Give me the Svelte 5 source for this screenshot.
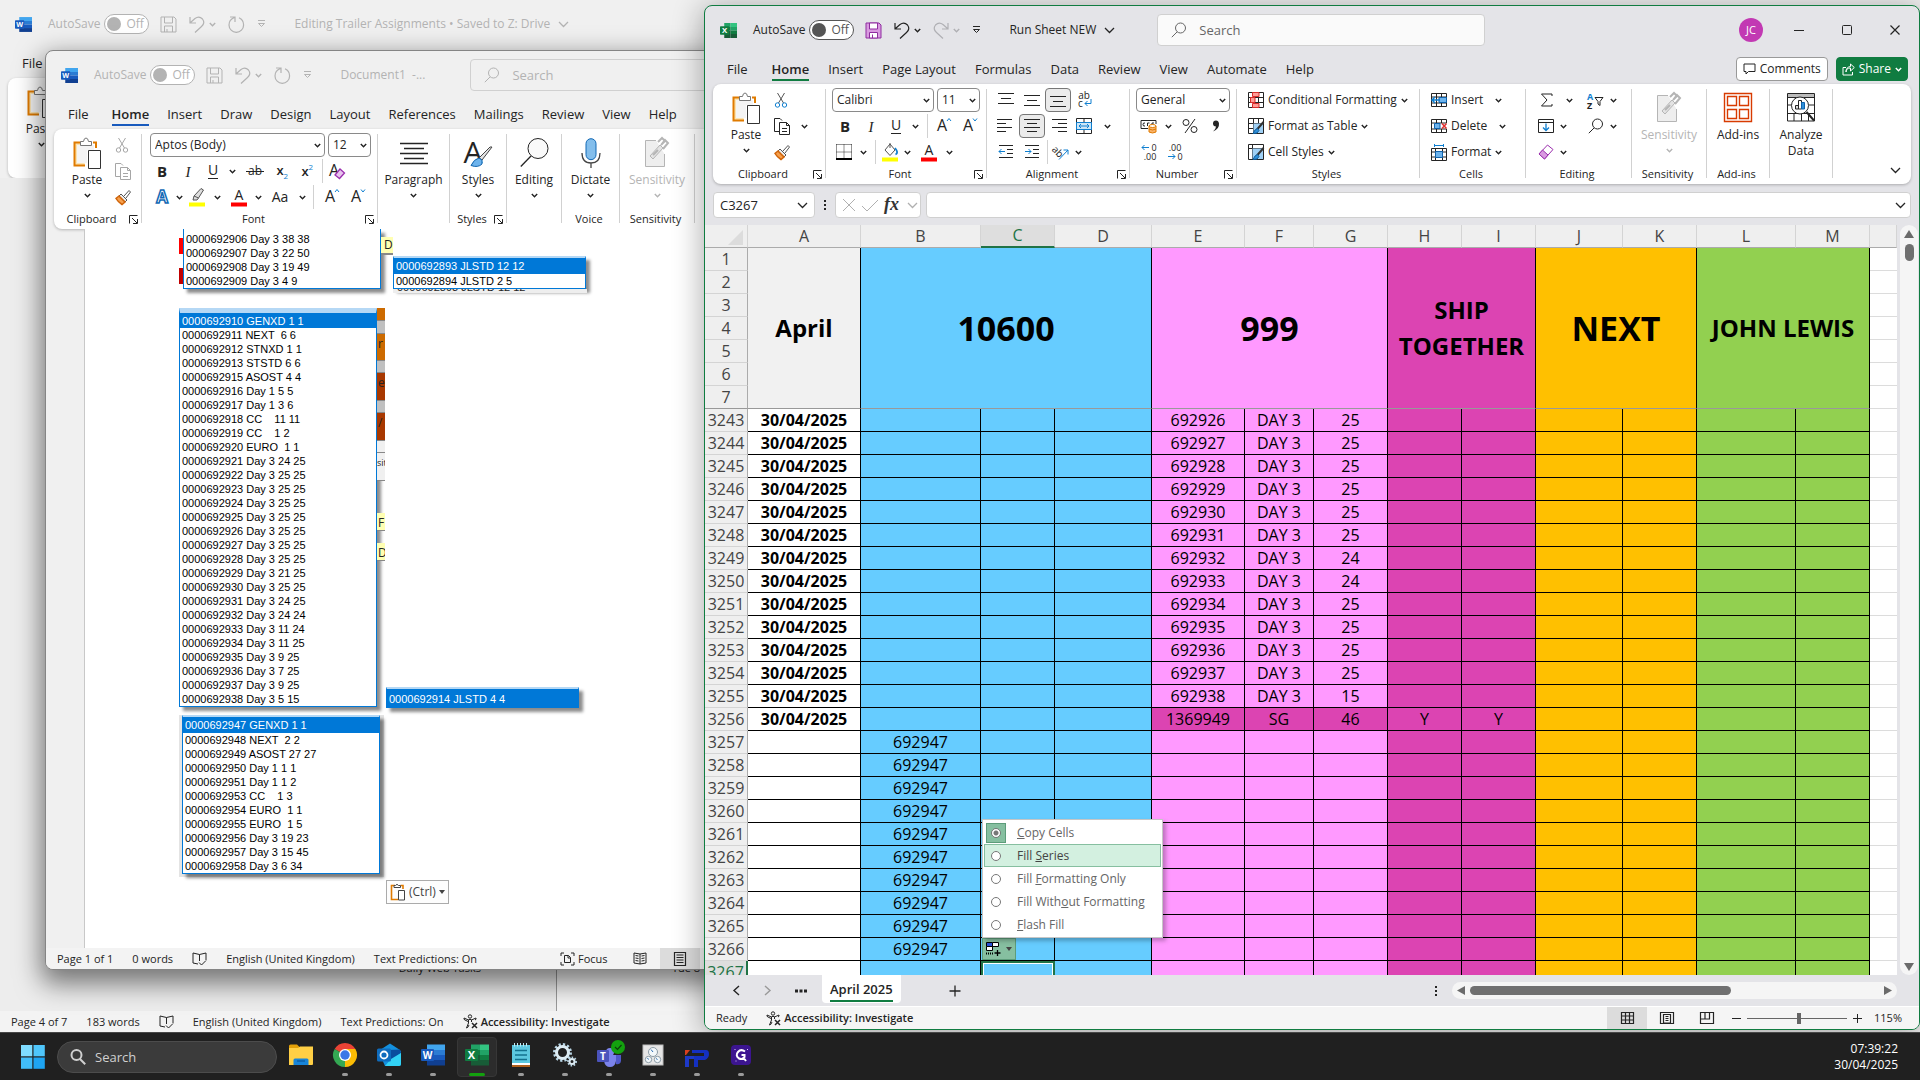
<script lang="ts">
  type Tool = [name: string, width: number, active?: boolean];
  type Icon = [width: number, height: number, body: string];

  const glyph = (x: number, y: number, size: number, s: string, extra = '') =>
    `<text x="${x}" y="${y}" font-size="${size}" text-anchor="middle" fill="currentColor" stroke="none" ${extra}>${s}</text>`;

  const clipboard =
    '<path d="M8 5.500H1.500V28.500H12" fill="#fbe3b0" stroke="#e07b00" stroke-width="2"/><path d="M20 5.500H23V11" stroke="#e07b00" stroke-width="2"/><path d="M4 8H21V13H14V26H4Z" fill="#f4f4f4" stroke="none"/><path d="M7.500 8.500V4.500H10.500Q11 1 13 1T15.500 4.500H18.500V8.500Z" fill="#fff" stroke="#777"/><path d="M15.500 13.500H27.500V31.500H15.500Z" fill="#fff" stroke="#333"/>';
  const brush =
    '<path d="M9 7 14 1.500 15.500 3 11 9" stroke="#555"/><path d="M6 5 12 11 10 13 4 7Z" fill="#eee" stroke="#555"/><path d="M4 7 1 9.500Q3 13 7 15.500L10 13Z" fill="#f6a04d" stroke="#d0640a" stroke-width="1.500"/>';
  const lines = (ys: number[], widths: number[], align = 0) =>
    ys.map((y, i) => `<path d="M${((18 - widths[i]) * align) / 2} ${y}.5h${widths[i]}"/>`).join('');
  const sheet = '<path d="M.5.5h15v15H.5ZM.5 5.500h15M.5 10.500h15M5.500.5v15M10.500.5v15" fill="#fff"/>';
  const label =
    '<path d="M13 3.500H2.500V29.500H21.500V17" fill="#eee"/><path d="M7 19 17 8 20 11 10 22Z" fill="#e3e3e3"/><path d="M15 5 19 1 22 4 18 8M18 8l4-5 3 3-5 6M10 18l5-5" stroke-width="2"/>';
  const letterA = (mark: string) => glyph(7, 14, 16, 'A') + `<path d="${mark}" stroke="#0f7fd0"/>`;

  const icons: Record<string, Icon> = {
    chev: [7, 5, '<path d="M.8 1 3.500 3.800 6.200 1" stroke-width="1.400"/>'],
    chevBig: [11, 7, '<path d="M1 1 5.500 5.500 10 1" stroke-width="1.300"/>'],
    Save: [17, 17, '<path d="M1 1H14L16 3V16H1ZM4.500 1V7H12.500V1M4.500 16V10H12.500V16M7 13V16"/>'],
    SaveColor: [17, 17, '<path d="M1 1H14L16 3V16H1Z" fill="#d99ae0" stroke="#8f2da0"/><path d="M4.500 1V7H12.500V1ZM4.500 16V10.500H12.500V16Z" fill="#fff" stroke="#8f2da0"/><path d="M7.500 12.500V16" stroke="#8f2da0"/>'],
    Undo: [16, 17, '<path d="M1 1V7H7M1.500 6.500 6 2.500Q10-.5 13.500 3 16.500 7 12.500 10.500L6 16.500" stroke-width="1.200"/>'],
    Redo: [16, 17, '<path d="M15 1V7H9M14.500 6.500 10 2.500Q6-.5 2.500 3-.5 7 3.500 10.500L10 16.500" stroke-width="1.200"/>'],
    Repeat: [17, 17, '<path d="M2 1H7V6M6.500 1.500Q1 3.500 1 9A7.300 7.300 0 0 0 15.600 9Q15.600 4 11 1.800" stroke-width="1.200"/>'],
    Customise: [9, 8, '<path d="M1 .5H8M1.500 3.500 4.500 6.500 7.500 3.500Z" stroke-width="1"/>'],
    Find: [16, 16, '<circle cx="9.500" cy="6" r="5"/><path d="M6 10 .8 15.200"/>'],
    Minimise: [12, 12, '<path d="M1 6.500H11"/>'],
    Maximise: [12, 12, '<rect x="1.500" y="1.500" width="9" height="9" rx="1"/>'],
    Close: [12, 12, '<path d="M1.500 1.500 10.500 10.500M10.500 1.500 1.500 10.500" stroke-width="1.200"/>'],
    Comment: [13, 12, '<path d="M1 1H12V8.500H5.500L3 11V8.500H1Z"/>'],
    Share: [13, 13, '<path d="M4 4.500H1V12H10.500V9M4 9Q4 5 8.500 5V8L12.300 4.500 8.500 1V3.500Q4 4 4 9Z"/>'],
    Paste: [28, 32, clipboard],
    Cut: [14, 16, '<path d="M3.500 1 9.500 11M10.500 1 4.500 11" stroke="#555"/><circle cx="3.500" cy="13" r="2.200" stroke="#0f7fd0"/><circle cx="10.500" cy="13" r="2.200" stroke="#0f7fd0"/>'],
    CutOff: [14, 16, '<path d="M3.500 1 9.500 11M10.500 1 4.500 11"/><circle cx="3.500" cy="13" r="2.200"/><circle cx="10.500" cy="13" r="2.200"/>'],
    Copy: [16, 17, '<path d="M5 13.500H.5V.5H6L8 2.500M5.500 4.500V16.500H15.500V7.500L12.500 4.500ZM12.500 4.500V7.500H15.500M8 10.500h5M8 13.500h5"/>'],
    'Format Painter': [16, 17, brush],
    Bold: [12, 17, glyph(6, 14, 15, 'B', 'font-weight="700"')],
    Italic: [12, 17, glyph(6, 14, 15, 'I', 'font-style="italic" font-family="Liberation Serif"')],
    Underline: [12, 18, glyph(6, 13, 14, 'U') + '<path d="M1 16.500H11"/>'],
    Strikethrough: [18, 16, glyph(9, 12, 12, 'ab') + '<path d="M0 8.500H18"/>'],
    Subscript: [14, 16, glyph(5, 12, 13, 'x', 'font-weight="600"') + '<text x="8.500" y="15.500" font-size="8" fill="#0f7fd0" stroke="none">2</text>'],
    Superscript: [14, 16, glyph(5, 13, 13, 'x', 'font-weight="600"') + '<text x="8.500" y="7" font-size="8" fill="#0f7fd0" stroke="none">2</text>'],
    'Clear Formatting': [18, 18, glyph(6, 14, 16, 'A') + '<path d="M7 13 12 7 16.500 11 11.500 16.500Z" fill="#e8c4ee" stroke="#9b2fae" stroke-width="1.300"/>'],
    'Text Effects': [16, 18, '<text x="8" y="15" font-size="17" font-weight="700" text-anchor="middle" fill="#fff" stroke="#1269b5" stroke-width="1.500">A</text>'],
    Highlight: [16, 20, '<path d="M5 9 12 1.500 14.500 3 9.500 11ZM5 9 4 13H8L9.500 11" stroke="#555" fill="#ddd"/><rect x="0" y="15.500" width="16" height="4" fill="#ff0" stroke="none"/>'],
    'Font Color': [16, 20, glyph(8, 12.5, 14, 'A') + '<rect x="0" y="15.500" width="16" height="4" fill="#f00" stroke="none"/>'],
    'Fill Color': [16, 20, '<path d="M3 8 8 2 13 8 8 13.500ZM8 6V1" stroke="#555" fill="#fff"/><path d="M13 6Q17 11 13.500 12.500" stroke="#0f7fd0" stroke-width="1.800"/><rect x="0" y="15.500" width="16" height="4" fill="#ff0" stroke="none"/>'],
    'Change Case': [18, 16, glyph(9, 13, 14, 'Aa')],
    'Grow Font': [17, 18, letterA('M12 4 14 1.500 16 4')],
    'Shrink Font': [17, 18, letterA('M12 1.500 14 4 16 1.500')],
    Borders: [16, 16, '<path d="M.5.5H15.500M.5.5V15M15.500.5V15M8 .5V15M.5 8H15.500" stroke-dasharray="1 1"/><path d="M0 15H16" stroke="#000" stroke-width="2"/>'],
    'Top Align': [18, 14, lines([0, 5, 10], [16, 10, 16], 1)],
    'Middle Align': [18, 14, lines([2, 7, 12], [16, 10, 16], 1)],
    'Bottom Align': [18, 14, lines([3, 8, 13], [16, 10, 16], 1)],
    'Wrap Text': [17, 18, glyph(7, 8, 10, 'ab') + glyph(3.5, 16, 10, 'c') + '<path d="M14 8V12.500H8M10.500 10 8 12.500 10.500 15" stroke="#0f7fd0"/>'],
    'Align Left': [18, 14, lines([0, 4, 8, 12], [15, 9, 15, 9], 0)],
    Center: [18, 14, lines([0, 4, 8, 12], [16, 10, 16, 10], 1)],
    'Align Right': [18, 14, lines([0, 4, 8, 12], [15, 9, 15, 9], 2)],
    Merge: [16, 16, '<path d="M.5.500H15.500V15.500H.5ZM8 .5V4M8 12V15.500"/><path d="M.5 4.500H15.500V11.500H.5Z" fill="#cde6f7" stroke="#0f7fd0"/><path d="M3 8H13M5 6 3 8 5 10M11 6 13 8 11 10" stroke="#0f7fd0"/>'],
    Outdent: [16, 14, '<path d="M1 .5H15M9 4.500H15M9 8.500H15M1 12.500H15"/><path d="M7 6.500H1M3.500 4 1 6.500 3.500 9" stroke="#0f7fd0"/>'],
    Indent: [16, 14, '<path d="M1 .5H15M9 4.500H15M9 8.500H15M1 12.500H15"/><path d="M1 6.500H7M4.500 4 7 6.500 4.500 9" stroke="#0f7fd0"/>'],
    Orientation: [18, 17, '<text x="0" y="8" font-size="10" fill="currentColor" stroke="none" transform="rotate(45 2 6)">ab</text><path d="M7 15.500 16 6M11.500 6H16V10.500" stroke="#0f7fd0"/>'],
    Accounting: [18, 16, '<path d="M1 2.500H16M1 2.500V10.500H8M16 2.500V6M5 5Q3 4.500 3 6.500T5 8M7.500 8V5H9.500M12 8V5H14"/><path d="M9 8V14Q12.500 16 16 14V8" fill="#f9b26a" stroke="#e07b00"/><ellipse cx="12.500" cy="8" rx="3.500" ry="1.500" fill="#fff" stroke="#e07b00"/><path d="M9 11Q12.500 13 16 11" stroke="#e07b00"/>'],
    Percent: [16, 16, '<circle cx="4" cy="4.500" r="3"/><circle cx="12" cy="11.500" r="3"/><path d="M13 1 3 15"/>'],
    Comma: [8, 12, '<path d="M4 .5A3 3 0 1 0 4 6.500Q4 9 1 11.500 7.500 9 7 3.500 6.500.5 4 .5Z" fill="currentColor" stroke="none"/>'],
    'Increase Decimal': [16, 18, glyph(13, 8, 9, '0') + glyph(9, 17, 9, '.00') + '<path d="M8 4.500H1M3.500 2 1 4.500 3.500 7" stroke="#0f7fd0"/>'],
    'Decrease Decimal': [16, 18, glyph(8, 8, 9, '.00') + glyph(13, 17, 9, '0') + '<path d="M1 13.500H8M5.500 11 8 13.500 5.500 16" stroke="#0f7fd0"/>'],
    Conditional: [16, 16, sheet + '<path d="M4.500.5H11V4.500H4.500ZM2.500 5.500H7V10.500H2.500ZM4.500 11.500H11V15.500H4.500Z" fill="#ff9c96" stroke="#d92b2b"/>'],
    TableFormat: [16, 16, sheet + '<path d="M5.500 5.500H15V15H5.500Z" fill="#9fd0f5" stroke="none"/><path d="M15.500 4 9 11.500" stroke="#333" stroke-width="2"/><path d="M9.500 10.500 7 12 5 15.500 9 15 11 12.500Z" fill="#2f8fd8" stroke="#0f5fa0"/>'],
    CellStyles: [16, 16, '<path d="M.5.500H15.500V15.500H.5ZM.5 4.500H15.500M4.500.5V15.500"/><path d="M4.500 4.500H15V15H4.500Z" fill="#9fd0f5" stroke="none"/><path d="M15.500 4 9 11.500" stroke="#333" stroke-width="2"/><path d="M9.500 10.500 7 12 5 15.500 9 15 11 12.500Z" fill="#2f8fd8" stroke="#0f5fa0"/>'],
    InsertCells: [16, 14, '<path d="M.5.5H15.500V13.500H.5ZM.5 4H15M.5 10H15M5.500.5V13.500M10.500.5V13.500"/><path d="M8 4.500H15.500V9.500H8Z" fill="#6db3ec" stroke="#0f63ad"/><path d="M9 7H1M4 4 1 7 4 10" stroke="#0f7fd0" stroke-width="1.500"/>'],
    DeleteCells: [16, 14, '<path d="M.5 13.500V10H15.500V13.500ZM.5 4V.5H15.500V4ZM5.500.5V4M10.500.5V4M5.500 10V13.500M10.500 10V13.500M.5 4V10"/><path d="M3.500 4.500H9V9.500H3.500Z" fill="#6db3ec" stroke="#0f63ad"/><path d="M11 4.500 15.500 9.500M15.500 4.500 11 9.500" stroke="#e03030" stroke-width="1.500"/>'],
    FormatCells: [16, 17, '<path d="M.5 4.500H15.500V16.500H.5ZM.5 8H15.500M.5 13H15.500M4.500 4.500V16.500M11.500 4.500V16.500"/><path d="M4.500 7.500H11.500V13.500H4.500Z" fill="#6db3ec" stroke="#0f63ad"/><path d="M3.500 0V3M12.500 0V3M3.500 1.500H12.500" stroke="#0f7fd0"/>'],
    AutoSum: [13, 14, '<path d="M12 3V1H1.500L7 7 1.500 13H12V11"/>'],
    Fill: [16, 14, '<path d="M.5.5H15.500V13.500H.5ZM.5 3.500H15.500"/><path d="M8 4.500V11.500M5 8.500 8 11.500 11 8.500" stroke="#0f7fd0" stroke-width="1.300"/>'],
    Clear: [16, 16, '<path d="M1 10 9.500 1 15 5.500 6.500 15Z" fill="#fff" stroke="#9b2fae"/><path d="M1 10 4.500 6 10 11 6.500 15Z" fill="#d99ae0" stroke="#9b2fae"/>'],
    Sort: [17, 17, '<text x="0" y="8" font-size="9" font-weight="700" fill="#0f7fd0" stroke="none">A</text><text x="0" y="16.500" font-size="9" font-weight="700" fill="currentColor" stroke="none">Z</text><path d="M8 5.500H16L13 9.500V13.500L11 12V9.500Z"/>'],
    Sensitivity: [28, 32, label],
    AddIns: [28, 29, '<path d="M.5.5H27.500V28.500H.5ZM3.500 3.500H12.500V12.500H3.500ZM15.500 3.500H24.500V12.500H15.500ZM3.500 16.500H12.500V25.500H3.500ZM15.500 16.500H24.500V25.500H15.500Z" stroke="#d83b01" stroke-width="1.400"/>'],
    Analyze: [28, 29, '<path d="M.5.500H27.500V28H.5Z"/><path d="M1 1H27V4H1Z" fill="#bbb" stroke="none"/><path d="M.5 4.500H27.500M.5 12H6M22 12H27.500M.5 20.500H27.500M7 20V28M14.500 20V28M21.500 20V28"/><circle cx="13" cy="12.500" r="8.500" fill="#fff"/><path d="M19.500 19 27 27.500" stroke-width="2"/><path d="M8.500 12.500H11.500V16H8.500Z" fill="#ddd"/><path d="M11.500 7.500H14.500V16H11.500Z" fill="#fff"/><path d="M14.500 9.500H17.500V16H14.500Z" fill="#2f8fd8" stroke="#0f63ad"/>'],
    Paragraph: [28, 22, '<path d="M0 1.500H28M4 6.500H24M0 11.500H28M4 16.500H24M0 21.500H28" stroke-width="1.300"/>'],
    Styles: [30, 30, glyph(10, 25, 30, 'A') + '<path d="M29 9 19 22 16 20 27 9Z" fill="#e4e4e4" stroke="#444"/><path d="M16 20Q11 21 8 27.500 15 30 19 26V22Z" fill="#6db3ec" stroke="#0f63ad"/>'],
    Editing: [28, 29, '<circle cx="18" cy="10.500" r="10" fill="#fafafa"/><path d="M11 18 .8 28.500" stroke-width="1.300"/>'],
    Dictate: [20, 30, '<rect x="5" y=".7" width="10" height="21" rx="5" fill="#83beec" stroke="#1269b5"/><path d="M1 15Q1 25 10 25T19 15M10 25V30" stroke="#444" stroke-width="1.300"/>'],
    launcher: [9, 9, '<path d="M.5 8.500V.5H8.500M3 3 8 8M8.500 4V8.500H4" />'],
    cancel: [14, 14, '<path d="M1 1 13 13M13 1 1 13"/>'],
    enter: [18, 13, '<path d="M1 7 6 12 17 1"/>'],
    fx: [18, 19, '<text x="0" y="14" font-size="18" font-style="italic" font-weight="700" font-family="Liberation Serif" fill="currentColor" stroke="none">fx</text>'],
    dots: [4, 12, '<path d="M1 1H3V3H1ZM1 5H3V7H1ZM1 9H3V11H1Z" fill="currentColor" stroke="none"/>'],
    left: [7, 11, '<path d="M6 1 1 5.500 6 10" stroke-width="1.400"/>'],
    right: [7, 11, '<path d="M1 1 6 5.500 1 10" stroke-width="1.400"/>'],
    more: [12, 4, '<path d="M0 .5H3V3.500H0ZM4.500.5H7.500V3.500H4.500ZM9 .5H12V3.500H9Z" fill="currentColor" stroke="none"/>'],
    plus: [12, 12, '<path d="M6 .5V11.500M.5 6H11.500" stroke-width="1.300"/>'],
    minus: [9, 9, '<path d="M0 4.500H9"/>'],
    zoomPlus: [9, 9, '<path d="M0 4.500H9M4.500 0V9"/>'],
    triLeft: [8, 9, '<path d="M8 0V9L0 4.500Z" fill="#6b6b6b" stroke="none"/>'],
    triRight: [8, 9, '<path d="M0 0V9L8 4.500Z" fill="#6b6b6b" stroke="none"/>'],
    triUp: [10, 8, '<path d="M0 8H10L5 0Z" fill="#6b6b6b" stroke="none"/>'],
    triDown: [10, 8, '<path d="M0 0H10L5 8Z" fill="#6b6b6b" stroke="none"/>'],
    caret: [6, 4, '<path d="M0 0H6L3 4Z" fill="currentColor" stroke="none"/>'],
    corner: [15, 15, '<path d="M15 0V15H0Z" fill="#dcdcdc" stroke="none"/>'],
    Proofing: [15, 14, '<path d="M6 12 1 11V1L7.500 2.500 14 1V8M7.500 2.500V9M7 10.500 9.500 13 14 8.500"/>'],
    Accessibility: [15, 15, '<circle cx="7" cy="2.500" r="1.700"/><path d="M1 4 5.500 6V9L3.500 14M13 4 8.500 6V8M1 4Q.5 5.500 2 6L5 7.500M5.500 5.500H8.500M13 4Q13.500 5.500 12 6M3.500 14Q5 14 6 11"/><path d="M9 9 14 14M14 9 9 14" stroke-width="1.500"/>'],
    Focus: [15, 14, '<path d="M4 1H1V4M11 1H14V4M4 13H1V10M11 13H14V10M4.500 3.500V10.500H10.500V5.500L8.500 3.500ZM8 3.500V6H10.500"/>'],
    'Read Mode': [14, 13, '<path d="M7 2 1 1V11L7 12 13 11V1ZM7 2V12M2.500 3.500 5.500 4M2.500 6 5.500 6.500M2.500 8.500 5.500 9M11.500 3.500 8.500 4M11.500 6 8.500 6.500M11.500 8.500 8.500 9"/>'],
    'Print Layout': [12, 14, '<path d="M.5.5H11.500V13.500H.5ZM2.500 3H9.500M2.500 5.500H9.500M2.500 8H9.500M2.500 10.500H9.500" stroke-width="1.200"/>'],
    Normal: [13, 12, '<path d="M.5.5H12.500V11.500H.5ZM.5 4H12.500M.5 8H12.500M4.500.5V11.500M8.500.5V11.500" stroke-width="1.200"/>'],
    'Page Layout': [14, 12, '<path d="M.5.500H13.500V11.500H.5ZM3.500 2.500H10.500V11H3.500ZM5.500 4.500H8.500M5.500 6.500H8.500M5.500 8.500H8.500" stroke-width="1.200"/>'],
    'Page Break': [14, 12, '<path d="M.5.500H13.500V11.500H.5ZM5 .5V7H.5M9.500.5V7H5" stroke-width="1.200"/>'],
    pasteSmall: [16, 18, '<path d="M5 2.500H1.500V16.500H8" stroke="#e07b00" stroke-width="1.600"/><path d="M10.500 2.500H13V6" stroke="#e07b00" stroke-width="1.600"/><path d="M4 4.500V2.500H5.500Q7 0 8.500 2.500H10.500V4.500Z" fill="#fff"/><path d="M8.500 7.500H14.500V17H8.500Z" fill="#fff"/>'],
    autofill: [16, 14, '<path d="M.5.5H6.500V4.500H.5Z" fill="#2a50d8" stroke="#000"/><path d="M6.500.5H12.500V4.500H6.500ZM.5 4.500H6.500V8.500H.5Z" fill="#fff" stroke="#000"/><path d="M0 11.500H8" stroke="#000" stroke-dasharray="1 1" stroke-width="2"/><path d="M11.500 8V14M8.500 11H14.500" stroke="#000" stroke-width="1.300"/>'],
    wordLogo: [24, 24, '<g stroke="none"><path d="M6 1.500H24V7H6Z" fill="#41a5ee"/><path d="M6 7H24V12H6Z" fill="#2b7cd3"/><path d="M6 12H24V17H6Z" fill="#185abd"/><path d="M6 17H24V22.500H6Z" fill="#103f91"/><rect y="6" width="13" height="12" rx="1" fill="#185abd"/></g><text x="6.500" y="15.500" font-size="10" font-weight="700" text-anchor="middle" fill="#fff" stroke="none">W</text>'],
    excelLogo: [24, 24, '<g stroke="none"><path d="M6 1.500H15V7H6Z" fill="#21a366"/><path d="M15 1.500H24V7H15Z" fill="#33c481"/><path d="M6 7H15V12H6Z" fill="#107c41"/><path d="M15 7H24V12H15Z" fill="#21a366"/><path d="M6 12H15V22.500H6Z" fill="#185c37"/><path d="M15 12H24V17H15Z" fill="#107c41"/><path d="M15 17H24V22.500H15Z" fill="#185c37"/><rect y="6" width="13" height="12" rx="1" fill="#107c41"/></g><text x="6.500" y="15.500" font-size="11" font-weight="700" text-anchor="middle" fill="#fff" stroke="none">X</text>'],
    Start: [24, 24, '<g stroke="none"><path d="M0 0H11.300V11.300H0Z" fill="#7fdcff"/><path d="M12.500 0H23.800V11.300H12.500Z" fill="#4fc6fb"/><path d="M0 12.500H11.300V23.800H0Z" fill="#41bdf8"/><path d="M12.500 12.500H23.800V23.800H12.500Z" fill="#1ea4f2"/></g>'],
    Explorer: [24, 24, '<g stroke="none"><path d="M0 3Q0 1.500 1.500 1.500H8L11 4.500V8H0Z" fill="#e3a008"/><path d="M0 5H9L11 3.500H24V21Q24 22 23 22H0Z" fill="#ffcf45"/><path d="M4.500 22V17Q4.500 15.500 6 15.500H18Q19.500 15.500 19.500 17V22Z" fill="#1784d8"/><path d="M8 18H16" stroke="#0c5fa8" stroke-width="1.500"/></g>'],
    Chrome: [24, 24, '<g stroke="none"><path d="M12 12 1.600 6A12 12 0 0 1 22.400 6Z" fill="#ea4335"/><path d="M12 12 22.400 6A12 12 0 0 1 12 24Z" fill="#fbbc04"/><path d="M12 12V24A12 12 0 0 1 1.600 6Z" fill="#34a853"/><path d="M12 6H22.400L17.200 15 12 24V12Z" fill="#fbbc04"/><circle cx="12" cy="12" r="6" fill="#fff"/><circle cx="12" cy="12" r="4.700" fill="#3b78e7"/></g>'],
    Outlook: [24, 24, '<g stroke="none"><path d="M3 7 13 .5 23 7 24 9V21Q24 23 22 23H8L4 14Z" fill="#1490df"/><path d="M12 7 23 6.500 24 10 14 17Z" fill="#0a4d9e"/><path d="M24 10V21Q24 23 22 23H8L14 16Z" fill="#32d2f5"/><rect y="5.500" width="14" height="13" rx="1.500" fill="#0f6cbd"/></g><circle cx="7" cy="12" r="3.500" stroke="#fff" stroke-width="1.800"/>'],
    Notepad: [20, 24, '<g stroke="none"><path d="M1 2H19V21H1Z" fill="#5cc8e0"/><path d="M1 20H19V22H1Z" fill="#fff"/><path d="M1 22H19V24H1Z" fill="#b0601c"/></g><path d="M4 7.500H16M4 12H16M4 16.500H16" stroke="#13728f" stroke-width="1.600"/><path d="M3.500 0V3.500M6.500 0V3.500M9.500 0V3.500M12.500 0V3.500M15.500 0V3.500" stroke="#bfeaf4"/>'],
    Services: [24, 24, '<circle cx="9.500" cy="9.500" r="8" stroke="#b9d6e6" stroke-width="3" stroke-dasharray="2.200 2"/><circle cx="9.500" cy="9.500" r="6" stroke="#dcebf3" stroke-width="3"/><circle cx="19" cy="18.500" r="4" stroke="#b9d6e6" stroke-width="2" stroke-dasharray="1.500 1.500"/><circle cx="19" cy="18.500" r="2.500" stroke="#dcebf3" stroke-width="2"/>'],
    Teams: [28, 28, '<g stroke="none"><circle cx="15" cy="11" r="4" fill="#7b83eb"/><path d="M9 14H21V20Q20 26 15 26T9 20Z" fill="#7b83eb"/><path d="M21 14H26V20Q25 24 21 23Z" fill="#5059c9"/><rect x="2" y="9" width="12" height="12" rx="1" fill="#4b53bc"/></g><text x="8" y="19" font-size="10" font-weight="700" text-anchor="middle" fill="#fff" stroke="none">T</text><circle cx="23" cy="6" r="7" fill="#13a10e" stroke="none"/><path d="M20 6 22.500 8.500 26.500 4" stroke="#0b3d0a" stroke-width="1.200"/>'],
    Meters: [20, 20, '<rect width="20" height="20" fill="#e6e6e6" stroke="#bdbdbd"/><g stroke="#8a9aa5" fill="#f3f8fb"><circle cx="10" cy="7" r="4.500"/><circle cx="5.500" cy="14.500" r="3.200"/><circle cx="14.500" cy="14.500" r="3.200"/></g><path d="M10 7 8 4.500M5.500 14.500 4.500 13M14.500 14.500 13 13.500" stroke="#2b6cb0"/>'],
    Planner: [24, 24, '<g stroke="none"><path d="M0 13H11V16H4V24H0Z" fill="#1d39c8"/><path d="M7 7H21Q24 7 24 11T20 17H13V24H9V13H19V10H7Z" fill="#1430c0"/><path d="M0 7H5L1 12H0Z" fill="#d8401f"/></g>'],
    Grab: [20, 20, '<rect width="20" height="20" rx="4" fill="#3c1590" stroke="none"/><path d="M14 6.500Q10 3.500 7 7T8 13.500Q12 15 13.500 12V10H10.500M12 12 15 16" stroke="#fff" stroke-width="2"/><path d="M4 4V5M5 15.500V16.500M16.500 4V5" stroke="#d9c8ff"/>'],
  };

  const backTabs = ['File'];
  const wordTabs = ['File', 'Home', 'Insert', 'Draw', 'Design', 'Layout', 'References', 'Mailings', 'Review', 'View', 'Help'];
  const excelTabs = ['File', 'Home', 'Insert', 'Page Layout', 'Formulas', 'Data', 'Review', 'View', 'Automate', 'Help'];

  const wordFont: Tool[][] = [
    [['Bold', 24], ['Italic', 28], ['Underline', 22], ['chev', 16], ['Strikethrough', 30], ['Subscript', 24], ['Superscript', 26], ['sep', 4], ['Clear Formatting', 26]],
    [['Text Effects', 24], ['chev', 10], ['gap', 6], ['Highlight', 26], ['chev', 14], ['Font Color', 30], ['chev', 8], ['Change Case', 36], ['chev', 8], ['sep', 14], ['Grow Font', 22], ['Shrink Font', 30]],
  ];
  const excelFont: Tool[][] = [
    [['Bold', 26], ['Italic', 26], ['Underline', 24], ['chev', 14], ['sep', 10], ['Grow Font', 22], ['Shrink Font', 30]],
    [['Borders', 24], ['chev', 14], ['sep', 10], ['Fill Color', 20], ['chev', 14], ['Font Color', 30], ['chev', 10]],
  ];
  const alignment: Tool[][] = [
    [['Top Align', 26], ['Middle Align', 26], ['Bottom Align', 26, true], ['Wrap Text', 28]],
    [['Align Left', 26], ['Center', 26, true], ['Align Right', 26], ['Merge', 26], ['chev', 20]],
    [['Outdent', 26], ['Indent', 26], ['sep', 4], ['Orientation', 24], ['chev', 10]],
  ];
  const numberTools: Tool[][] = [
    [['Accounting', 26], ['chev', 12], ['Percent', 32], ['Comma', 20]],
    [['Increase Decimal', 26], ['Decrease Decimal', 26]],
  ];
  const editing: Tool[][] = [
    [['AutoSum', 28], ['chev', 18], ['gap', 4], ['Sort', 26], ['chev', 10]],
    [['Fill', 28], ['chev', 6], ['gap', 18], ['Find', 24], ['chev', 10]],
    [['Clear', 28], ['chev', 6]],
  ];
  const cellStyles = [['Conditional', 'Conditional Formatting'], ['TableFormat', 'Format as Table'], ['CellStyles', 'Cell Styles']];
  const cellTools = [['InsertCells', 'Insert'], ['DeleteCells', 'Delete'], ['FormatCells', 'Format']];

  const topLoads = ['0000692906 Day 3 38 38', '0000692907 Day 3 22 50', '0000692908 Day 3 19 49', '0000692909 Day 3 4 9'];
  const mainLoads = [
    '0000692910 GENXD 1 1', '0000692911 NEXT  6 6', '0000692912 STNXD 1 1', '0000692913 STSTD 6 6',
    '0000692915 ASOST 4 4', '0000692916 Day 1 5 5', '0000692917 Day 1 3 6', '0000692918 CC    11 11',
    '0000692919 CC    1 2', '0000692920 EURO  1 1', '0000692921 Day 3 24 25', '0000692922 Day 3 25 25',
    '0000692923 Day 3 25 25', '0000692924 Day 3 25 25', '0000692925 Day 3 25 25', '0000692926 Day 3 25 25',
    '0000692927 Day 3 25 25', '0000692928 Day 3 25 25', '0000692929 Day 3 21 25', '0000692930 Day 3 25 25',
    '0000692931 Day 3 24 25', '0000692932 Day 3 24 24', '0000692933 Day 3 11 24', '0000692934 Day 3 11 25',
    '0000692935 Day 3 9 25', '0000692936 Day 3 7 25', '0000692937 Day 3 9 25', '0000692938 Day 3 5 15',
  ];
  const lastLoads = [
    '0000692947 GENXD 1 1', '0000692948 NEXT  2 2', '0000692949 ASOST 27 27', '0000692950 Day 1 1 1',
    '0000692951 Day 1 1 2', '0000692953 CC    1 3', '0000692954 EURO  1 1', '0000692955 EURO  1 5',
    '0000692956 Day 3 19 23', '0000692957 Day 3 15 45', '0000692958 Day 3 6 34',
  ];

  // slivers of the booking screen that show beside the pasted list
  const slivers = [
    ['orange', 13, ''], ['grey', 13, ''], ['orange', 27, 'r'], ['grey', 12, ''], ['rust', 28, 'e'],
    ['grey', 12, ''], ['rust', 28, '/'], ['plain', 12, ''], ['plain', 28, 'sit'], ['clear', 32, ''],
    ['yellow', 18, 'F'], ['clear', 12, ''], ['yellow', 18, 'D'],
  ] as [string, number, string][];

  const columns = [
    { id: 'A', width: 113, fill: 'white' },
    { id: 'B', width: 120, fill: 'blue' },
    { id: 'C', width: 74, fill: 'blue' },
    { id: 'D', width: 97, fill: 'blue' },
    { id: 'E', width: 93, fill: 'pink' },
    { id: 'F', width: 69, fill: 'pink' },
    { id: 'G', width: 74, fill: 'pink' },
    { id: 'H', width: 74, fill: 'magenta' },
    { id: 'I', width: 74, fill: 'magenta' },
    { id: 'J', width: 87, fill: 'gold' },
    { id: 'K', width: 74, fill: 'gold' },
    { id: 'L', width: 99, fill: 'green' },
    { id: 'M', width: 74, fill: 'green' },
  ];

  const cartons = [25, 25, 25, 25, 25, 25, 24, 24, 25, 25, 25, 25, 15];
  const rows = Array.from({ length: 25 }, (_, i) => {
    const cells: Record<string, string | number> = {};
    if (i < 14) cells.A = '30/04/2025';
    if (i < 13) Object.assign(cells, { E: 692926 + i, F: 'DAY 3', G: cartons[i] });
    if (i === 13) Object.assign(cells, { E: 1369949, F: 'SG', G: 46, H: 'Y', I: 'Y' });
    if (i > 13 && i < 24) cells.B = 692947;
    return { number: 3243 + i, cells };
  });

  const fillOptions = [
    ['', 'C', 'opy Cells'],
    ['Fill ', 'S', 'eries'],
    ['Fill ', 'F', 'ormatting Only'],
    ['Fill With', 'o', 'ut Formatting'],
    ['', 'F', 'lash Fill'],
  ];
  let fillChoice = $state(0);
  let zoom = $state(115);

  const taskbar = ['Explorer', 'Chrome', 'Outlook', 'wordLogo', 'excelLogo', 'Notepad', 'Services', 'Teams', 'Meters', 'Planner', 'Grab'];
</script>

{#snippet icon(name: string, scale = 1)}
  {@const [w, h, body] = icons[name]}
  <svg class="icon" width={Math.round(w * scale)} height={Math.round(h * scale)} viewBox="0 0 {w} {h}" aria-hidden="true">{@html body}</svg>
{/snippet}

{#snippet toolRow(tools: Tool[])}
  <div class="tool-row">
    {#each tools as [name, width, active]}
      {#if name === 'sep'}
        <span class="tool-sep" style:width="{width}px"></span>
      {:else if name === 'gap'}
        <span style:width="{width}px"></span>
      {:else}
        <button class="tool" class:active style:width="{width}px" aria-label={name === 'chev' ? 'More options' : name}>
          {@render icon(name)}
        </button>
      {/if}
    {/each}
  </div>
{/snippet}

{#snippet bigTool(name: string, text: string, arrow = true)}
  <button class="big">
    <span class="big-icon">{@render icon(name)}</span>
    <span class="big-text">{text}</span>
    {#if arrow}<span class="big-arrow">{@render icon('chev')}</span>{/if}
  </button>
{/snippet}

{#snippet groupLabel(text: string, launcher = false)}
  <div class="group-label">
    <span>{text}</span>
    {#if launcher}<button class="launcher" aria-label="{text} settings">{@render icon('launcher')}</button>{/if}
  </div>
{/snippet}

{#snippet combo(text: string, name: string)}
  <div class="combo">
    <select aria-label={name}><option>{text}</option></select>
    {@render icon('chev')}
  </div>
{/snippet}

{#snippet quickAccess(logo: string, save: string, redo: string)}
  <span class="app-logo">{@render icon(logo, 0.7)}</span>
  <span class="autosave">AutoSave</span>
  <button class="toggle" role="switch" aria-checked="false" aria-label="AutoSave"><i></i>Off</button>
  <button class="qa" aria-label="Save">{@render icon(save)}</button>
  <button class="qa" aria-label="Undo">{@render icon('Undo')}{@render icon('chev')}</button>
  <button class="qa redo" aria-label="Redo">{@render icon(redo)}{#if redo === 'Redo'}{@render icon('chev')}{/if}</button>
  <button class="qa" aria-label="Customise toolbar">{@render icon('Customise')}</button>
{/snippet}

{#snippet tabs(names: string[])}
  <nav class="tabs">
    {#each names as name}
      <button class="tab" class:current={name === 'Home'}>{name}</button>
    {/each}
  </nav>
{/snippet}

{#snippet clipboardGroup(cut: string)}
  <div class="group">
    <div class="group-body clip">
      {@render bigTool('Paste', 'Paste')}
      <div class="clip-tools">
        <button class="tool" aria-label="Cut">{@render icon(cut)}</button>
        <button class="tool" aria-label="Copy">
          {@render icon('Copy')}{#if cut === 'Cut'}{@render icon('chev')}{/if}
        </button>
        <button class="tool" aria-label="Format Painter">{@render icon('Format Painter')}</button>
      </div>
    </div>
    {@render groupLabel('Clipboard', true)}
  </div>
  <i class="rule"></i>
{/snippet}

{#snippet bigGroup(size: string, name: string, text: string, caption: string, arrow = true, launcher = false)}
  <div class="group {size}" class:disabled={name === 'Sensitivity'}>
    <div class="group-body">{@render bigTool(name, text, arrow)}</div>
    {@render groupLabel(caption, launcher)}
  </div>
  <i class="rule"></i>
{/snippet}

{#snippet loads(items: string[], selected = true)}
  <ul class="loads" class:has-selection={selected}>
    {#each items as item, i}
      <li class:selected={selected && i === 0}>{item}</li>
    {/each}
  </ul>
{/snippet}

<div class="desktop">
  <div class="workspace">
    <section class="window back">
      <header class="title">
        {@render quickAccess('wordLogo', 'Save', 'Repeat')}
        <span class="doc-name">Editing Trailer Assignments • Saved to Z: Drive {@render icon('chevBig')}</span>
      </header>
      {@render tabs(backTabs)}
      <div class="ribbon">
        <div class="group-body clip">{@render bigTool('Paste', 'Paste')}</div>
      </div>
      <div class="back-doc">
        <div class="back-cell">Daily Web Tasks</div>
        <div class="back-cell last">Tue 8</div>
      </div>
      <footer class="status">
        <span>Page 4 of 7</span>
        <span>183 words</span>
        {@render icon('Proofing')}
        <span>English (United Kingdom)</span>
        <span>Text Predictions: On</span>
        <span class="access">{@render icon('Accessibility')} Accessibility: Investigate</span>
      </footer>
    </section>

    <section class="window front-word">
      <header class="title">
        {@render quickAccess('wordLogo', 'Save', 'Repeat')}
        <span class="doc-name">Document1&nbsp; -...</span>
        <label class="search">{@render icon('Find')}<input aria-label="Search" placeholder="Search" /></label>
      </header>
      {@render tabs(wordTabs)}
      <div class="ribbon">
        {@render clipboardGroup('CutOff')}
        <div class="group font-group">
          <div class="group-body rows">
            <div class="tool-row combos">
              <div class="grow">{@render combo('Aptos (Body)', 'Font')}</div>
              <div class="size">{@render combo('12', 'Font size')}</div>
            </div>
            {#each wordFont as tools}{@render toolRow(tools)}{/each}
          </div>
          {@render groupLabel('Font', true)}
        </div>
        <i class="rule"></i>
        {@render bigGroup('w71', 'Paragraph', 'Paragraph', '')}
        {@render bigGroup('w56', 'Styles', 'Styles', 'Styles', true, true)}
        {@render bigGroup('w54', 'Editing', 'Editing', '')}
        {@render bigGroup('w57', 'Dictate', 'Dictate', 'Voice')}
        {@render bigGroup('w74', 'Sensitivity', 'Sensitivity', 'Sensitivity')}
      </div>

      <div class="doc">
        <div class="page">
          <div class="paste top">
            <div class="reds"><i></i><i></i></div>
            {@render loads(topLoads, false)}
            <span class="note">D</span>
          </div>
          <div class="paste jl">
            {@render loads(['0000692893 JLSTD 12 12', '0000692894 JLSTD 2 5'])}
            <div class="cut-line"><span>0000692893 JLSTD 12 12</span></div>
          </div>
          <div class="paste main">
            {@render loads(mainLoads)}
            <div class="slivers">
              {#each slivers as [kind, height, text]}
                <span class={kind} style:height="{height}px">{text}</span>
              {/each}
            </div>
          </div>
          <div class="paste single">{@render loads(['0000692914 JLSTD 4 4'])}</div>
          <div class="paste bottom">{@render loads(lastLoads)}</div>
          <button class="paste-options">{@render icon('pasteSmall')} (Ctrl) {@render icon('caret')}</button>
        </div>
      </div>

      <footer class="status">
        <span>Page 1 of 1</span>
        <span>0 words</span>
        {@render icon('Proofing')}
        <span>English (United Kingdom)</span>
        <span>Text Predictions: On</span>
        <span class="focus">{@render icon('Focus')} Focus</span>
        <div class="views">
          <button class="view" aria-label="Read Mode">{@render icon('Read Mode')}</button>
          <button class="view on" aria-label="Print Layout">{@render icon('Print Layout')}</button>
        </div>
      </footer>
    </section>

    <section class="window excel">
      <header class="title">
        {@render quickAccess('excelLogo', 'SaveColor', 'Redo')}
        <span class="doc-name">Run Sheet NEW {@render icon('chevBig')}</span>
        <label class="search">{@render icon('Find')}<input aria-label="Search" placeholder="Search" /></label>
        <span class="spacer"></span>
        <span class="avatar">JC</span>
        <button class="caption" aria-label="Minimise">{@render icon('Minimise')}</button>
        <button class="caption" aria-label="Maximise">{@render icon('Maximise')}</button>
        <button class="caption" aria-label="Close">{@render icon('Close')}</button>
      </header>
      <div class="tab-line">
        {@render tabs(excelTabs)}
        <button class="comments">{@render icon('Comment')} Comments</button>
        <button class="share">{@render icon('Share')} Share {@render icon('chev')}</button>
      </div>
      <div class="ribbon">
        {@render clipboardGroup('Cut')}
        <div class="group font-group">
          <div class="group-body rows">
            <div class="tool-row combos">
              <div class="grow">{@render combo('Calibri', 'Font')}</div>
              <div class="size">{@render combo('11', 'Font size')}</div>
            </div>
            {#each excelFont as tools}{@render toolRow(tools)}{/each}
          </div>
          {@render groupLabel('Font', true)}
        </div>
        <i class="rule"></i>
        <div class="group w142">
          <div class="group-body rows">{#each alignment as tools}{@render toolRow(tools)}{/each}</div>
          {@render groupLabel('Alignment', true)}
        </div>
        <i class="rule"></i>
        <div class="group w106">
          <div class="group-body rows">
            <div class="tool-row combos"><div class="grow">{@render combo('General', 'Number format')}</div></div>
            {#each numberTools as tools}{@render toolRow(tools)}{/each}
          </div>
          {@render groupLabel('Number', true)}
        </div>
        <i class="rule"></i>
        <div class="group w182">
          <div class="group-body rows wide">
            {#each cellStyles as [name, text]}
              <button class="text-tool">{@render icon(name)} {text} {@render icon('chev')}</button>
            {/each}
          </div>
          {@render groupLabel('Styles')}
        </div>
        <i class="rule"></i>
        <div class="group w105">
          <div class="group-body rows wide">
            {#each cellTools as [name, text]}
              <button class="text-tool cell-tool">{@render icon(name)} <span>{text}</span> {@render icon('chev')}</button>
            {/each}
          </div>
          {@render groupLabel('Cells')}
        </div>
        <i class="rule"></i>
        <div class="group w105">
          <div class="group-body rows">{#each editing as tools}{@render toolRow(tools)}{/each}</div>
          {@render groupLabel('Editing')}
        </div>
        <i class="rule"></i>
        {@render bigGroup('w74', 'Sensitivity', 'Sensitivity', 'Sensitivity')}
        {@render bigGroup('w62', 'AddIns', 'Add-ins', 'Add-ins', false)}
        {@render bigGroup('w62', 'Analyze', 'Analyze Data', '', false)}
        <button class="collapse" aria-label="Collapse ribbon">{@render icon('chevBig')}</button>
      </div>

      <div class="formula-bar">
        <label class="name-box"><input aria-label="Name box" value="C3267" />{@render icon('chevBig')}</label>
        <span class="grip">{@render icon('dots')}</span>
        <div class="fx-box">
          {@render icon('cancel')}
          {@render icon('enter')}
          <button aria-label="Insert function">{@render icon('fx')}</button>
          {@render icon('chevBig')}
        </div>
        <label class="formula"><input aria-label="Formula bar" />{@render icon('chevBig')}</label>
      </div>

      <div class="sheet">
        <div class="grid">
          <table>
            <colgroup>
              <col style:width="43px" />
              {#each columns as col}<col style:width="{col.width}px" />{/each}
              <col />
            </colgroup>
            <thead>
              <tr>
                <th class="corner">{@render icon('corner')}</th>
                {#each columns as col}
                  <th class:chosen={col.id === 'C'}>{col.id}</th>
                {/each}
                <th></th>
              </tr>
            </thead>
            <tbody class="frozen">
              {#each [1, 2, 3, 4, 5, 6, 7] as n}
                <tr>
                  <th>{n}</th>
                  {#if n === 1}
                    <td class="month" rowspan="7">April</td>
                    <td class="blue large" colspan="3" rowspan="7">10600</td>
                    <td class="pink large" colspan="3" rowspan="7">999</td>
                    <td class="magenta" colspan="2" rowspan="7">SHIP TOGETHER</td>
                    <td class="gold large" colspan="2" rowspan="7">NEXT</td>
                    <td class="green" colspan="2" rowspan="7">JOHN LEWIS</td>
                  {/if}
                  <td class="blank"></td>
                </tr>
              {/each}
            </tbody>
            <tbody>
              {#each rows as row}
                <tr class:sg={row.number === 3256}>
                  <th class:chosen={row.number === 3267}>{row.number}</th>
                  {#each columns as col}
                    <td class={col.fill} class:selection={row.number === 3267 && col.id === 'C'}>
                      {#if row.number === 3266 && col.id === 'C'}
                        <div class="autofill">
                          <button class="autofill-button" aria-label="Auto fill options">
                            {@render icon('autofill')}{@render icon('caret')}
                          </button>
                          <div class="fill-menu">
                            {#each fillOptions as [before, key, after], i}
                              <label class:hover={i === 1}>
                                <span class="radio-box" class:checked={fillChoice === i}>
                                  <input type="radio" name="fill" value={i} bind:group={fillChoice} />
                                </span>
                                <span>{before}<u>{key}</u>{after}</span>
                              </label>
                            {/each}
                          </div>
                        </div>
                      {:else}
                        {row.cells[col.id] ?? ''}
                      {/if}
                    </td>
                  {/each}
                  <td class="blank"></td>
                </tr>
              {/each}
            </tbody>
          </table>
        </div>
        <div class="vscroll">
          {@render icon('triUp')}
          <i></i>
          <span class="spacer"></span>
          {@render icon('triDown')}
        </div>
      </div>

      <div class="sheet-tabs">
        <button aria-label="Previous sheet">{@render icon('left')}</button>
        <button class="dim" aria-label="Next sheet">{@render icon('right')}</button>
        <button aria-label="All sheets">{@render icon('more')}</button>
        <button class="sheet-tab"><span>April 2025</span></button>
        <button class="new-sheet" aria-label="New sheet">{@render icon('plus')}</button>
        <span class="spacer"></span>
        {@render icon('dots')}
        <div class="hscroll">{@render icon('triLeft')}<i></i><span class="spacer"></span>{@render icon('triRight')}</div>
      </div>

      <footer class="status">
        <span>Ready</span>
        <span class="access">{@render icon('Accessibility')} Accessibility: Investigate</span>
        <span class="spacer"></span>
        <div class="views">
          <button class="view on" aria-label="Normal view">{@render icon('Normal')}</button>
          <button class="view" aria-label="Page layout view">{@render icon('Page Layout')}</button>
          <button class="view" aria-label="Page break preview">{@render icon('Page Break')}</button>
          <div class="zoom">
            {@render icon('minus')}
            <input type="range" min="10" max="210" bind:value={zoom} aria-label="Zoom" />
            {@render icon('zoomPlus')}
          </div>
          <span class="percent">{zoom}%</span>
        </div>
      </footer>
    </section>
  </div>

  <footer class="taskbar">
    <button class="start" aria-label="Start">{@render icon('Start')}</button>
    <label class="task-search">{@render icon('Find')}<input aria-label="Search Windows" placeholder="Search" /></label>
    {#each taskbar as name, i}
      <button class="task" class:front={name === 'excelLogo'} aria-label={name}>
        <span class="task-icon">{@render icon(name)}</span>
        <i class:idle={i === 0}></i>
      </button>
    {/each}
    <span class="spacer"></span>
    <div class="clock"><span>07:39:22</span><span>30/04/2025</span></div>
  </footer>
</div>

<style>
  :global(body) {
    overflow: hidden;
  }

  .desktop {
    display: flex;
    flex-direction: column;
    height: 100vh;
    font: 12px/16px 'Open Sans', 'Noto Sans', sans-serif;
    color: #242424;
  }

  .desktop * {
    box-sizing: border-box;
  }

  button,
  input,
  select {
    font: inherit;
    color: inherit;
    background: none;
    border: 0;
    padding: 0;
    margin: 0;
    min-width: 0;
  }

  input,
  select {
    outline: none;
    appearance: none;
  }

  .icon {
    display: block;
    flex: none;
    fill: none;
    stroke: currentColor;
    stroke-width: 1;
    overflow: visible;
    font-family: 'Open Sans', sans-serif;
  }

  .spacer {
    flex: 1;
  }

  .workspace {
    flex: 1;
    position: relative;
    min-height: 0;
    overflow: hidden;
  }

  .window {
    position: absolute;
    display: flex;
    flex-direction: column;
    overflow: hidden;
    background: #f0f0f0;
  }

  .back {
    inset: 0;
  }

  .front-word {
    left: 45px;
    top: 50px;
    bottom: 62px;
    right: 45%;
    border: 1px solid #858585;
    border-radius: 8px;
    box-shadow: 0 10px 26px 4px rgba(0, 0, 0, 0.5);
  }

  .excel {
    left: 704px;
    top: 5px;
    bottom: 2px;
    right: 0;
    border: 1px solid #107c41;
    border-radius: 8px;
    background: #e4e4e8;
    box-shadow: 0 4px 30px 2px rgba(0, 0, 0, 0.32);
  }

  /* title bar */
  .title {
    display: flex;
    align-items: center;
    flex: none;
    height: 48px;
    padding-left: 15px;
  }

  .back .title,
  .front-word .title {
    color: #b3b3b3;
  }

  .app-logo {
    margin-right: 16px;
  }

  .toggle {
    display: flex;
    align-items: center;
    gap: 5px;
    width: 45px;
    height: 20px;
    margin: 0 11px 0 4px;
    padding-left: 2px;
    border: 1px solid currentColor;
    border-radius: 10px;
    background: #fff;
  }

  .toggle i {
    width: 14px;
    height: 14px;
    border-radius: 50%;
    background: currentColor;
  }

  .excel .toggle {
    color: #555;
  }

  .qa {
    display: flex;
    align-items: center;
    gap: 4px;
    margin-right: 12px;
  }

  .excel .redo {
    color: #b0b0b4;
  }

  .doc-name {
    display: flex;
    align-items: center;
    gap: 8px;
    margin-left: 16px;
    white-space: nowrap;
  }

  .search {
    display: flex;
    align-items: center;
    gap: 12px;
    width: 328px;
    height: 32px;
    padding-left: 13px;
    border: 1px solid #d0d0d0;
    border-radius: 4px;
    font-size: 13px;
  }

  .front-word .search {
    margin-left: 45px;
    flex: none;
  }

  .excel .search {
    margin-left: 42px;
    background: #fafafa;
    color: #666;
  }

  .search input::placeholder,
  .task-search input::placeholder {
    color: inherit;
    opacity: 1;
  }

  .avatar {
    width: 24px;
    height: 24px;
    margin-right: 12px;
    border-radius: 50%;
    background: #c239b3;
    color: #fff;
    font-size: 11px;
    line-height: 24px;
    text-align: center;
  }

  .caption {
    display: flex;
    align-items: center;
    justify-content: center;
    width: 48px;
    height: 32px;
  }

  /* tabs */
  .tabs {
    display: flex;
    gap: 19px;
    flex: none;
    height: 30px;
    padding: 5px 0 0 22px;
    font-size: 13px;
  }

  .front-word .tabs {
    gap: 18px;
  }

  .tab {
    height: 22px;
    line-height: 20px;
    white-space: nowrap;
    border-bottom: 2px solid transparent;
  }

  .tab:first-child {
    margin-right: 5px;
  }

  .current {
    font-weight: 600;
    border-color: #185abd;
  }

  .excel .current {
    border-color: #107c41;
  }

  .tab-line {
    display: flex;
    align-items: center;
    height: 30px;
    padding-right: 11px;
  }

  .tab-line .tabs {
    flex: 1;
  }

  .comments,
  .share {
    display: flex;
    align-items: center;
    gap: 4px;
    height: 24px;
    padding: 0 6px;
    border: 1px solid #999;
    border-radius: 4px;
    background: #fff;
  }

  .share {
    margin-left: 8px;
    padding: 0 5px;
    border-color: #107c41;
    background: #107c41;
    color: #fff;
  }

  /* ribbon */
  .ribbon {
    display: flex;
    flex: none;
    height: 100px;
    margin: 0 8px;
    border-radius: 8px;
    background: #fff;
    box-shadow: 0 1px 3px rgba(0, 0, 0, 0.25);
  }

  .rule {
    flex: none;
    width: 1px;
    margin: 5px 0 6px;
    background: #d1d1d1;
  }

  .group {
    display: flex;
    flex-direction: column;
    flex: none;
  }

  .group-body {
    display: flex;
    height: 81px;
  }

  .group-body > .big {
    flex: 1;
  }

  .rows {
    flex-direction: column;
    padding: 3px 6px 0;
  }

  .front-word .rows {
    padding-left: 8px;
  }

  .rows.wide {
    padding-left: 11px;
  }

  .w54 { width: 54px; }
  .w56 { width: 56px; }
  .w57 { width: 57px; }
  .w62 { width: 62px; }
  .w71 { width: 71px; }
  .w74 { width: 74px; }
  .w105 { width: 105px; }
  .w106 { width: 106px; }
  .w142 { width: 142px; }
  .w182 { width: 182px; }

  .front-word .font-group { width: 235px; }
  .excel .font-group { width: 160px; }

  .tool-row {
    display: flex;
    align-items: center;
    height: 26px;
  }

  .combos {
    gap: 3px;
  }

  .combos .grow {
    flex: 1;
    min-width: 0;
  }

  .combos .size {
    width: 43px;
  }

  .combo {
    display: flex;
    align-items: center;
    height: 24px;
    padding: 0 3px 0 4px;
    border: 1px solid #8a8a8a;
    border-radius: 4px;
  }

  .combo select {
    flex: 1;
  }

  .tool {
    display: flex;
    flex: none;
    align-items: center;
    justify-content: center;
    height: 24px;
  }

  .tool.active {
    border: 1px solid #777;
    border-radius: 4px;
    background: #ebebeb;
  }

  .tool-sep {
    flex: none;
    height: 24px;
    background: linear-gradient(#d1d1d1, #d1d1d1) center / 1px 100% no-repeat;
  }

  .clip {
    padding-left: 13px;
  }

  .clip > .big {
    flex: none;
    width: 40px;
  }

  .clip-tools {
    display: flex;
    flex-direction: column;
    width: 34px;
    padding: 3px 0 0 8px;
  }

  .excel .clip-tools {
    width: 59px;
  }

  .clip-tools .tool {
    justify-content: flex-start;
    gap: 11px;
    height: 26px;
  }

  .front-word .clip-tools .tool:not(:last-child) {
    color: #a6a6a6;
  }

  .big {
    display: flex;
    flex-direction: column;
    align-items: center;
    padding-top: 7px;
    line-height: 16px;
  }

  .big-icon {
    display: flex;
    align-items: center;
    height: 33px;
    margin-bottom: 3px;
  }

  .big-arrow {
    padding-top: 5px;
  }

  .disabled .big {
    color: #b5b5b5;
  }

  .group-label {
    display: flex;
    align-items: center;
    height: 18px;
    padding-right: 3px;
  }

  .group-label span {
    flex: 1;
    text-align: center;
    font-size: 11px;
  }

  .text-tool {
    display: flex;
    align-items: center;
    gap: 4px;
    height: 26px;
    white-space: nowrap;
  }

  .cell-tool span {
    margin-right: 8px;
  }

  .cell-tool:last-child span {
    margin-right: 0;
  }

  .collapse {
    margin: auto 10px 10px auto;
  }

  /* pasted lists */
  .doc {
    flex: 1;
    min-height: 0;
    padding-left: 38px;
  }

  .page {
    display: grid;
    grid-template-columns: 207px auto;
    grid-template-rows: 79px 407px 165px auto;
    justify-content: start;
    height: 100%;
    padding-left: 94px;
    border-left: 1px solid #c8c8c8;
    background: #fff;
  }

  .paste {
    display: flex;
    align-items: flex-start;
  }

  .loads {
    flex: none;
    width: 198px;
    margin: 0;
    padding: 0;
    list-style: none;
    border: 1px solid #0078d7;
    border-top: 0;
    background: #fff;
    box-shadow: 4px 4px 3px rgba(0, 0, 0, 0.45);
    font: 11px/14px 'Liberation Sans', Arial, sans-serif;
    color: #000;
    white-space: pre;
  }

  .has-selection {
    border-top: 2px solid #b5d8f5;
  }

  .loads li {
    height: 14px;
    padding-left: 2px;
  }

  .loads .selected {
    height: 16px;
    padding-top: 1px;
    background: #0078d7;
    color: #fff;
  }

  .main .loads .selected {
    height: 15px;
  }

  .reds {
    display: flex;
    flex-direction: column;
    flex: none;
    gap: 14px;
    width: 4px;
    padding-top: 9px;
  }

  .reds i {
    height: 16px;
    background: #f00;
  }

  .reds i:last-child {
    background: #c00000;
  }

  .top .loads {
    padding-top: 3px;
  }

  .note {
    flex: none;
    width: 12px;
    height: 18px;
    margin-top: 8px;
    padding-left: 3px;
    border-bottom: 2px solid #888;
    background: #ffffb3;
  }

  .jl {
    flex-direction: column;
    padding: 27px 0 0 7px;
  }

  .jl .loads,
  .single .loads {
    width: 193px;
  }

  .cut-line {
    display: flex;
    align-items: flex-end;
    width: 194px;
    height: 4px;
    padding-left: 4px;
    overflow: hidden;
    background: #eee;
    font: 11px/12px 'Liberation Sans', Arial, sans-serif;
  }

  .main .has-selection {
    border-top-width: 5px;
  }

  .slivers {
    display: flex;
    flex-direction: column;
    width: 8px;
  }

  .slivers span {
    overflow: hidden;
    flex: none;
    padding-left: 1px;
    line-height: 20px;
    border-bottom: 1px solid #888;
  }

  .slivers .orange { background: #cc6a00; }
  .slivers .grey { background: #c0c0c0; }
  .slivers .rust { background: #a83800; }
  .slivers .yellow { background: #ffffb3; }
  .slivers .plain { background: #f0f0f0; padding-left: 0; font-size: 9px; }
  .slivers .clear { border: 0; }

  .single {
    align-self: end;
    padding-bottom: 7px;
  }

  .single .loads .selected {
    height: 18px;
    padding-top: 3px;
  }

  .bottom {
    align-self: start;
    width: 205px;
    padding: 0 3px 3px;
    background: #e4e4e4;
  }

  .paste-options {
    grid-area: 4 / 2;
    display: flex;
    align-items: center;
    align-self: start;
    justify-self: start;
    gap: 3px;
    height: 24px;
    padding: 0 3px;
    border: 1px solid #ababab;
    background: #fdfdfd;
    color: #444;
  }

  /* status bars */
  .status {
    display: flex;
    align-items: center;
    flex: none;
    gap: 19px;
    height: 21px;
    padding-left: 11px;
    background: #f3f3f3;
    font-size: 11px;
    white-space: nowrap;
  }

  .access,
  .focus {
    display: flex;
    align-items: center;
    gap: 3px;
  }

  .access {
    font-weight: 600;
  }

  .focus {
    margin-left: 64px;
  }

  .views {
    display: flex;
    align-items: center;
    height: 100%;
  }

  .focus + .views {
    margin-left: -7px;
  }

  .view {
    display: flex;
    align-items: center;
    justify-content: center;
    flex: none;
    width: 40px;
    height: 100%;
  }

  .view.on {
    background: #dcdcdc;
  }

  .back-doc {
    display: flex;
    flex: 1;
  }

  .back-cell {
    display: flex;
    align-items: flex-end;
    width: 557px;
    padding: 0 75px 35px 0;
    justify-content: flex-end;
    border-right: 1px solid #999;
    background: #ededed;
    font-size: 11px;
  }

  .back-cell.last {
    justify-content: flex-start;
    flex: 1;
    padding-left: 115px;
    background: #f5f5f5;
  }

  /* formula bar */
  .formula-bar {
    display: flex;
    flex: none;
    height: 26px;
    margin: 8px 8px 7px;
    font-size: 13px;
  }

  .name-box,
  .fx-box,
  .formula {
    display: flex;
    align-items: center;
    border: 1px solid #d0d0d0;
    border-radius: 4px;
    background: #fff;
  }

  .name-box {
    width: 102px;
    padding: 0 6px;
  }

  .name-box input,
  .formula input {
    flex: 1;
  }

  .grip {
    display: flex;
    align-items: center;
    justify-content: center;
    width: 20px;
  }

  .fx-box {
    width: 86px;
    padding: 0 2px 0 6px;
    justify-content: space-between;
    color: #b0b0b0;
  }

  .fx-box button {
    color: #333;
  }

  .formula {
    flex: 1;
    margin-left: 5px;
    padding-right: 4px;
  }

  /* sheet */
  .sheet {
    display: flex;
    flex: 1;
    min-height: 0;
  }

  .grid {
    flex: 1;
    overflow: hidden;
    background: #fff;
  }

  table {
    width: 100%;
    table-layout: fixed;
    border-collapse: separate;
    border-spacing: 0;
    font-size: 16px;
    line-height: 22px;
    color: #000;
  }

  th,
  td {
    height: 23px;
    padding: 0;
    overflow: hidden;
    text-align: center;
    border: 0 solid #000;
    border-width: 0 1px 1px 0;
  }

  th {
    font-weight: 400;
    color: #444;
    background: #efefef;
    border-color: #d4d4d4;
  }

  tbody th {
    border-right-color: #ababab;
  }

  thead th {
    border-bottom-color: #ababab;
  }

  thead .chosen {
    line-height: 21px;
    background: #dedede;
    color: #217346;
    border-bottom: 2px solid #217346;
  }

  tbody .chosen {
    background: #dedede;
    color: #217346;
    border-right: 2px solid #217346;
  }

  .corner .icon {
    margin: 2px 4px 0 auto;
  }

  .frozen td {
    border-bottom-color: #999;
    font-size: 24px;
    line-height: 36px;
    font-weight: 700;
  }

  .frozen tr:last-child th {
    border-bottom-color: #999;
  }

  .frozen .large {
    font-size: 34px;
  }

  .frozen .month {
    background: #f1f1f1;
  }

  td.blank,
  .frozen td.blank {
    border-color: #dcdcdc;
    border-right: 0;
  }

  .white { background: #fff; font-weight: 700; }
  .blue { background: #66ccff; }
  .pink { background: #ff99ff; }
  .magenta { background: #dc44b2; }
  .gold { background: #ffc000; }
  .green { background: #92d050; }
  .sg .pink { background: #dc44b2; }

  .selection {
    border: 2px solid #217346;
    border-bottom: 0;
    box-shadow: inset 0 0 0 1px #fff;
  }

  td:has(.autofill) {
    overflow: visible;
  }

  .autofill {
    position: relative;
    width: 34px;
    height: 22px;
    margin-left: 1px;
  }

  .autofill-button {
    display: flex;
    align-items: center;
    justify-content: space-between;
    width: 100%;
    height: 100%;
    padding: 0 3px;
    border: 1px solid #5d9c7a;
    background: #86bfa0;
    color: #444;
  }

  .fill-menu {
    position: absolute;
    left: 0;
    bottom: 100%;
    z-index: 2;
    width: 181px;
    padding: 1px;
    border: 1px solid #c6c6c6;
    background: #fff;
    box-shadow: 3px 3px 4px rgba(0, 0, 0, 0.25);
    font-size: 12px;
    line-height: 16px;
    color: #666;
  }

  .fill-menu label {
    display: flex;
    align-items: center;
    gap: 11px;
    height: 23px;
    padding-left: 1px;
    border: 1px solid transparent;
    white-space: nowrap;
  }

  .fill-menu .hover {
    border-color: #86bfa0;
    background: #d3f0e0;
    color: #444;
  }

  .radio-box {
    display: flex;
    align-items: center;
    justify-content: center;
    width: 20px;
    height: 20px;
    border: 1px solid transparent;
  }

  .radio-box.checked {
    border-color: #5d9c7a;
    background: #86bfa0;
  }

  .fill-menu input {
    width: 10px;
    height: 10px;
    border: 1px solid #777;
    border-radius: 50%;
    background: #fff;
  }

  .fill-menu input:checked {
    background: radial-gradient(#777 2px, #fff 3px);
  }

  .vscroll {
    display: flex;
    flex-direction: column;
    align-items: center;
    width: 18px;
    margin: 0 1px 0 3px;
    padding: 5px 0 4px;
    border-radius: 9px;
    background: #f5f5f5;
  }

  .vscroll i {
    width: 9px;
    height: 17px;
    margin-top: 6px;
    border-radius: 5px;
    background: #707070;
  }

  .sheet-tabs {
    display: flex;
    align-items: center;
    flex: none;
    height: 31px;
    padding: 0 22px 0 28px;
  }

  .sheet-tabs > button {
    margin-right: 24px;
  }

  .sheet-tabs .dim {
    color: #999;
  }

  .sheet-tabs button:nth-child(3) {
    margin-right: 15px;
  }

  .sheet-tabs > .sheet-tab {
    align-self: flex-start;
    height: 28px;
    margin-right: 48px;
    padding: 1px 8px 0;
    border-radius: 0 0 4px 4px;
    background: #fff;
    font-size: 13px;
    font-weight: 600;
    line-height: 22px;
  }

  .sheet-tab span {
    display: block;
    border-bottom: 2px solid #107c41;
  }

  .hscroll {
    display: flex;
    align-items: center;
    width: 445px;
    height: 17px;
    margin-left: 14px;
    padding: 0 5px;
    border-radius: 9px;
    background: #f5f5f5;
  }

  .hscroll i {
    width: 261px;
    height: 9px;
    margin-left: 5px;
    border-radius: 5px;
    background: #707070;
  }

  .excel .status {
    height: 23px;
    border-top: 1px solid #fff;
    background: #f5f5f5;
  }

  .zoom {
    display: flex;
    align-items: center;
    gap: 6px;
    margin-left: 5px;
  }

  .zoom input {
    width: 100px;
    height: 14px;
    background: linear-gradient(#666, #666) center / 100% 1px no-repeat;
  }

  .zoom input::-webkit-slider-thumb {
    appearance: none;
    width: 4px;
    height: 11px;
    background: #666;
  }

  .percent {
    margin: 0 17px 0 12px;
  }

  /* taskbar */
  .taskbar {
    display: flex;
    align-items: center;
    flex: none;
    height: 48px;
    padding: 0 22px 0 21px;
    border-top: 1px solid #474747;
    background: #202020;
    color: #fff;
  }

  .task-search {
    display: flex;
    align-items: center;
    gap: 9px;
    width: 220px;
    height: 32px;
    margin: 0 2px 0 12px;
    padding-left: 12px;
    border: 1px solid #4c4c4c;
    border-radius: 16px;
    background: #3b3b3b;
    color: #d0d0d0;
    font-size: 13px;
  }

  .task-search .icon {
    transform: scaleX(-1);
    stroke-width: 2;
  }

  .task {
    display: flex;
    flex-direction: column;
    align-items: center;
    width: 40px;
    height: 40px;
    margin: 0 2px;
    border: 1px solid transparent;
    border-radius: 4px;
  }

  .task.front {
    border-color: #373737;
    background: #2c2c2c;
  }

  .task-icon {
    display: flex;
    align-items: center;
    justify-content: center;
    flex: 1;
    height: 35px;
  }

  .task i {
    width: 6px;
    height: 3px;
    border-radius: 2px;
    background: #9a9a9a;
  }

  .task i.idle {
    background: none;
  }

  .task.front i {
    width: 16px;
    background: #13a10e;
  }

  .clock {
    display: flex;
    flex-direction: column;
    font-size: 12px;
    text-align: right;
  }
</style>
